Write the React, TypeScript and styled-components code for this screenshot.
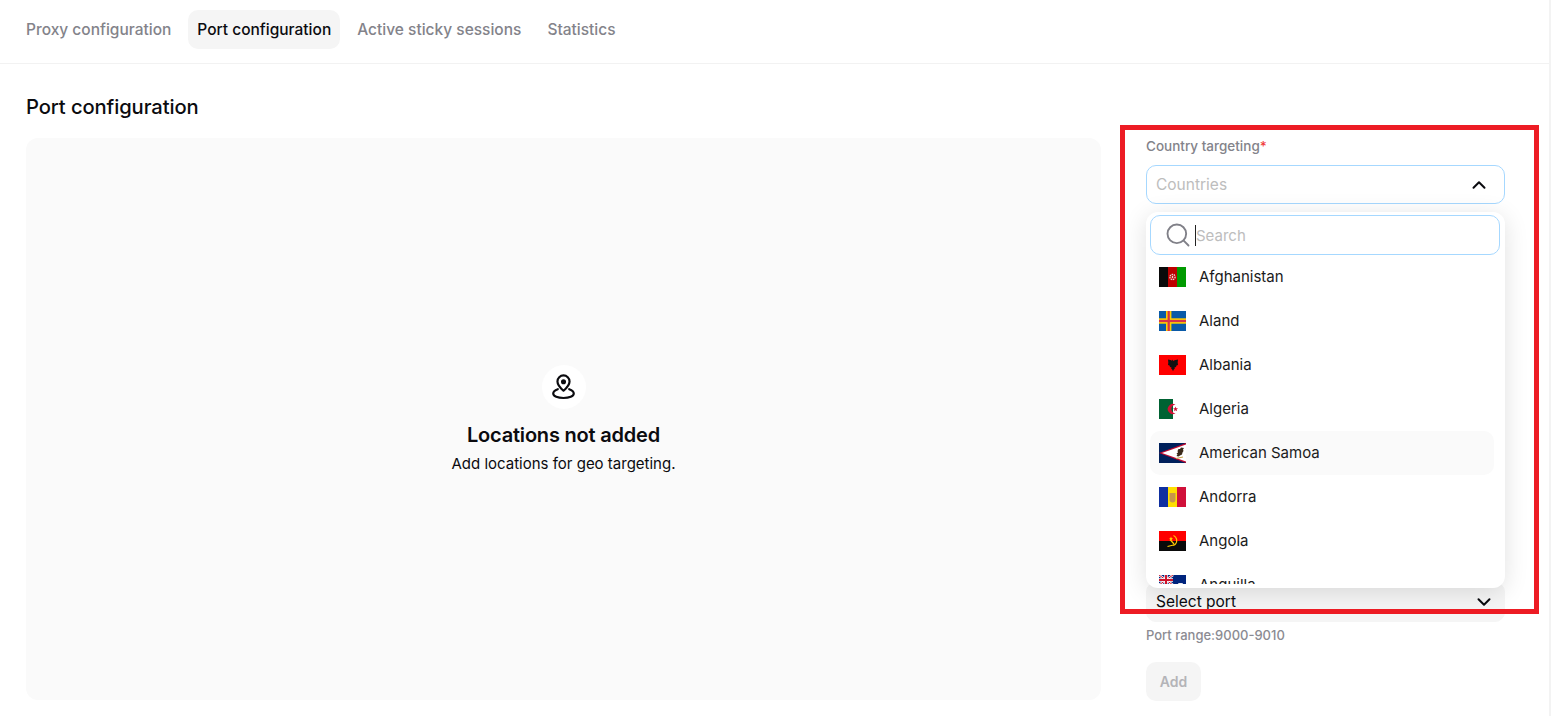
import React from "react";
import styled, { createGlobalStyle } from "styled-components";
import { ChevronDown, ChevronUp, Search } from "lucide-react";

const GlobalStyle = createGlobalStyle`
  html, body {
    margin: 0;
    padding: 0;
    background: #fff;
    overflow: hidden;
  }
  body {
    font-family: "Inter", "Noto Sans", sans-serif;
    color: #0b0b0f;
  }
`;

const Page = styled.div`
  position: relative;
  width: 1551px;
  height: 716px;
  box-sizing: border-box;
  border-right: 2px solid #f3f3f3;
  overflow: hidden;
`;

const TabBar = styled.nav`
  display: flex;
  align-items: flex-start;
  gap: 8px;
  box-sizing: border-box;
  height: 64px;
  padding: 10px 17px 0;
  border-bottom: 1px solid #f2f2f2;
`;

const Tab = styled.div<{ $active?: boolean }>`
  display: flex;
  align-items: center;
  height: 39px;
  padding: 0 9px;
  border-radius: 10px;
  font-size: 15.5px;
  font-weight: 500;
  background: ${(p) => (p.$active ? "#f5f5f5" : "transparent")};
  color: ${(p) => (p.$active ? "#0b0b0f" : "#83838a")};
`;

const Content = styled.main`
  padding: 29px 44px 0 26px;
`;

const Title = styled.h2`
  margin: 0 0 18px;
  font-size: 20.2px;
  line-height: 27px;
  font-weight: 500;
  letter-spacing: -0.1px;
`;

const Columns = styled.div`
  display: flex;
  gap: 45px;
`;

const EmptyPanel = styled.section`
  width: 1075px;
  height: 562px;
  background: #fafafa;
  border-radius: 12px;
  display: flex;
  flex-direction: column;
  align-items: center;
  justify-content: center;
`;

const EmptyIcon = styled.div`
  width: 44px;
  height: 44px;
  border-radius: 50%;
  background: #fff;
  display: flex;
  align-items: center;
  justify-content: center;
  margin-bottom: 12px;
`;

const EmptyTitle = styled.div`
  font-size: 20px;
  line-height: 28px;
  font-weight: 600;
  letter-spacing: -0.2px;
`;

const EmptyText = styled.div`
  font-size: 15px;
  line-height: 20px;
  margin-top: 5px;
`;

const Side = styled.aside`
  position: relative;
  width: 359px;
`;

const Label = styled.div`
  font-size: 13.5px;
  line-height: 16px;
  font-weight: 500;
  color: #83838a;
  margin-bottom: 11px;

  span {
    color: #f03a3a;
  }
`;

const SelectBox = styled.div<{ $open?: boolean }>`
  display: flex;
  align-items: center;
  justify-content: space-between;
  box-sizing: border-box;
  height: ${(p) => (p.$open ? "39px" : "40px")};
  padding: ${(p) => (p.$open ? "0 14px 0 9px" : "0 9px 1px 9px")};
  border-radius: 10px;
  font-size: 15.5px;
  background: ${(p) => (p.$open ? "#fff" : "#f5f5f5")};
  border: 1px solid ${(p) => (p.$open ? "#a6d8ff" : "#f5f5f5")};
  color: ${(p) => (p.$open ? "#bdbdbd" : "#0b0b0f")};

  svg {
    color: #0b0b0f;
  }
`;

const PortGroup = styled.div`
  margin-top: 378px;
`;

const Hint = styled.div`
  margin-top: 5px;
  font-size: 13px;
  line-height: 16px;
  font-weight: 500;
  color: #8b8b92;
`;

const AddButton = styled.button`
  display: block;
  width: 55px;
  height: 39px;
  margin-top: 19px;
  padding: 0;
  border: 0;
  border-radius: 10px;
  background: #f5f5f5;
  color: #b4b4b8;
  font: 600 14px "Inter", sans-serif;
`;

const Dropdown = styled.div`
  position: absolute;
  top: 74px;
  left: 0;
  width: 359px;
  height: 376px;
  box-sizing: border-box;
  padding: 3px 5px 4px 4px;
  background: #fff;
  border-radius: 12px;
  box-shadow: 0 4px 24px rgba(0, 0, 0, 0.12);
  display: flex;
  flex-direction: column;
`;

const SearchBox = styled.div`
  flex: none;
  display: flex;
  align-items: center;
  box-sizing: border-box;
  width: 350px;
  height: 40px;
  padding-left: 13px;
  border: 1px solid #a6d8ff;
  border-radius: 10px;
  font-size: 15px;
  color: #bdbdbd;

  svg {
    color: #808088;
    margin-right: 3px;
  }
`;

const Caret = styled.span`
  width: 1px;
  height: 21px;
  background: #222;
`;

const CountryList = styled.div`
  flex: 1;
  overflow: hidden;
  width: 344px;
`;

const CountryRow = styled.div<{ $hover?: boolean }>`
  display: flex;
  align-items: center;
  gap: 13px;
  height: 44px;
  padding-left: 9px;
  border-radius: 10px;
  font-size: 15px;
  color: #1b1b20;
  background: ${(p) => (p.$hover ? "#fafafa" : "transparent")};
`;

const CountryName = styled.span`
  padding-bottom: 2px;
`;

const Flag = styled.svg`
  flex: none;
  width: 27px;
  height: 20px;
  display: block;
`;

const Annotation = styled.div`
  position: absolute;
  left: 1120px;
  top: 125px;
  width: 419px;
  height: 489px;
  box-sizing: border-box;
  border: 5px solid #ed1c24;
  pointer-events: none;
`;

const LocationIcon = () => (
  <svg width="29" height="29" viewBox="0 0 24 24" fill="none" stroke="#0b0b0f" strokeWidth="1.8" strokeLinecap="round" strokeLinejoin="round">
    <path d="M12 15.500c-2.600-2.300-5-4.600-5-7.700a5 5 0 0 1 10 0c0 3.100-2.400 5.400-5 7.700Z" />
    <circle cx="12" cy="8" r="1.200" fill="#0b0b0f" />
    <path d="M7.300 14.200C5 15 3.500 16.300 3.500 17.800c0 2.300 3.800 3.700 8.500 3.700s8.500-1.400 8.500-3.700c0-1.500-1.500-2.800-3.800-3.600" />
  </svg>
);

const flags: Record<string, React.ReactNode> = {
  Afghanistan: (
    <>
      <rect width="9" height="20" fill="#0a0a0a" />
      <rect x="9" width="9" height="20" fill="#be0000" />
      <rect x="18" width="9" height="20" fill="#009a00" />
      <circle cx="13.500" cy="10" r="2.600" fill="none" stroke="#f1d6d6" strokeWidth="1.300" strokeDasharray="1.500 .7" />
      <rect x="12.800" y="8.800" width="1.400" height="2.400" fill="#f1d6d6" />
    </>
  ),
  Aland: (
    <>
      <rect width="27" height="20" fill="#0a5aa8" />
      <rect x="7" width="5.400" height="20" fill="#ffce00" />
      <rect y="7.300" width="27" height="5.400" fill="#ffce00" />
      <rect x="8.600" width="2.200" height="20" fill="#d6324a" />
      <rect y="8.900" width="27" height="2.200" fill="#d6324a" />
    </>
  ),
  Albania: (
    <>
      <rect width="27" height="20" fill="#ff0000" />
      <path d="M12.800 6l.7-1.500.7 1.500 1.300-.8 3.500-.7-.3 3 .3 2.500-1.500.5-.5 1.500-1.500.5.3 1.200-1 .8-.8 1.800-.8-1.800-1-.8.3-1.200-1.500-.5-.5-1.500-1.500-.5.3-2.500-.3-3 3.500.7Z" fill="#111" />
    </>
  ),
  Algeria: (
    <>
      <rect width="14" height="20" fill="#006233" />
      <rect x="14" width="13" height="20" fill="#fff" />
      <path d="M16.500 5.800a5 5 0 1 0 0 8.400 4.200 4.200 0 1 1 0-8.400Z" fill="#d21034" />
      <path d="M16.500 7.500l.7 1.700 1.800.1-1.400 1.100 .5 1.800-1.600-1-1.500 1 .5-1.800-1.400-1.100 1.800-.1Z" fill="#d21034" />
    </>
  ),
  "American Samoa": (
    <>
      <rect width="27" height="20" fill="#00205b" />
      <path d="M0 10L27 0v20Z" fill="#bf0a30" />
      <path d="M3 10L27 1.500v17Z" fill="#fff" />
      <path d="M25 5l-3-.5-1 1.500-1.500 0-1 2 .5 1.500-1.500 1 1 1-1 1.500 2 .5 1.500-1 2-1 .5-2 1-1.500-.5-1.500Z" fill="#3b2a1a" />
      <path d="M17 15.500l7-1.500" stroke="#c9a24a" strokeWidth="1.200" />
    </>
  ),
  Andorra: (
    <>
      <rect width="9" height="20" fill="#0f2fa0" />
      <rect x="9" width="9" height="20" fill="#fedf00" />
      <rect x="18" width="9" height="20" fill="#d0103a" />
      <path d="M10.500 6h6v6.500a3 3 0 0 1-6 0Z" fill="#c7964a" />
    </>
  ),
  Angola: (
    <>
      <rect width="27" height="10" fill="#ff0000" />
      <rect y="10" width="27" height="10" fill="#0a0a0a" />
      <path d="M14.500 4.500a5.500 5.500 0 0 1 2 8.500l-2 1.500M8.500 15.500l8-2M11 8.500l4 4.500" fill="none" stroke="#ffcb00" strokeWidth="1.200" />
      <path d="M12 5.500l.6 1.500 1.500 0-1.200 1 .4 1.500-1.300-.8-1.200.8 .4-1.500-1.200-1 1.400 0Z" fill="#ffcb00" />
    </>
  ),
  Anguilla: (
    <>
      <rect width="27" height="20" fill="#00247d" />
      <path d="M0 0l14 10M14 0L0 10" stroke="#fff" strokeWidth="2.400" />
      <path d="M0 0l14 10M14 0L0 10" stroke="#cf142b" strokeWidth="1" />
      <path d="M7 0v10M0 5h14" stroke="#fff" strokeWidth="3.400" />
      <path d="M7 0v10M0 5h14" stroke="#cf142b" strokeWidth="2" />
      <rect x="19" y="8" width="5" height="7" rx="1" fill="#e8e8ee" />
    </>
  ),
};

const countries = Object.keys(flags);

export default function App() {
  return (
    <Page>
      <GlobalStyle />
      <TabBar>
        <Tab>Proxy configuration</Tab>
        <Tab $active>Port configuration</Tab>
        <Tab>Active sticky sessions</Tab>
        <Tab>Statistics</Tab>
      </TabBar>
      <Content>
        <Title>Port configuration</Title>
        <Columns>
          <EmptyPanel>
            <EmptyIcon>
              <LocationIcon />
            </EmptyIcon>
            <EmptyTitle>Locations not added</EmptyTitle>
            <EmptyText>Add locations for geo targeting.</EmptyText>
          </EmptyPanel>
          <Side>
            <Label>
              Country targeting<span>*</span>
            </Label>
            <SelectBox $open>
              Countries
              <ChevronUp size={22} strokeWidth={2.200} />
            </SelectBox>
            <Dropdown>
              <SearchBox>
                <Search size={28} strokeWidth={1.600} />
                <Caret />
                Search
              </SearchBox>
              <CountryList>
                {countries.map((name) => (
                  <CountryRow key={name} $hover={name === "American Samoa"}>
                    <Flag viewBox="0 0 27 20">{flags[name]}</Flag>
                    <CountryName>{name}</CountryName>
                  </CountryRow>
                ))}
              </CountryList>
            </Dropdown>
            <PortGroup>
              <SelectBox>
                Select port
                <ChevronDown size={22} strokeWidth={2.200} />
              </SelectBox>
              <Hint>Port range:9000-9010</Hint>
              <AddButton>Add</AddButton>
            </PortGroup>
          </Side>
        </Columns>
      </Content>
      <Annotation />
    </Page>
  );
}
